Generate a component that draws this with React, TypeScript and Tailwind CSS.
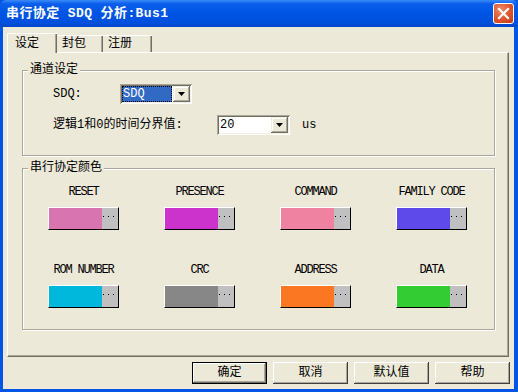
const colorItems = [
  { name: 'RESET', color: 'bg-[#d874b0]' },
  { name: 'PRESENCE', color: 'bg-[#cc33cc]' },
  { name: 'COMMAND', color: 'bg-[#ef82a0]' },
  { name: 'FAMILY CODE', color: 'bg-[#5e4aeb]' },
  { name: 'ROM NUMBER', color: 'bg-[#00b7dc]' },
  { name: 'CRC', color: 'bg-[#878787]' },
  { name: 'ADDRESS', color: 'bg-[#fc7722]' },
  { name: 'DATA', color: 'bg-[#33cc33]' },
]

const Arrow = () => (
  <svg width="7" height="4" viewBox="0 0 7 4">
    <path d="M0 0h7L3.5 4z" fill="#000" />
  </svg>
)

const Combo = ({ value, width, selected }: { value: string; width: string; selected?: boolean }) => (
  <div className={`${width} h-[20px] flex p-[2px] bg-white shadow-[inset_1px_1px_0_#aca899,inset_-1px_-1px_0_#fff,inset_2px_2px_0_#716f64,inset_-2px_-2px_0_#f1efe2]`}>
    <div className="flex-1 flex items-center pr-[1px]">
      {selected ? (
        <span className="w-full h-full flex items-center pl-[1px] bg-[#316ac5] text-white outline-1 outline-dotted outline-black -outline-offset-1">{value}</span>
      ) : (
        <span className="pl-[1px]">{value}</span>
      )}
    </div>
    <div className="w-[17px] flex items-center justify-center bg-[#ece9d8] shadow-[inset_-1px_-1px_0_#716f64,inset_1px_1px_0_#f1efe2,inset_-2px_-2px_0_#aca899,inset_2px_2px_0_#fff]">
      <Arrow />
    </div>
  </div>
)

const Group = ({ title, className, children }: { title: string; className: string; children: React.ReactNode }) => (
  <div className={`relative border border-[#aca899] shadow-[inset_1px_1px_0_#fff,1px_1px_0_#fff] ${className}`}>
    <span className="absolute -top-[8px] left-[5px] px-[2px] bg-[#ece9d8] leading-[14px]">{title}</span>
    {children}
  </div>
)

const Swatch = ({ color }: { color: string }) => (
  <div className="flex w-[71px] h-[23px] border border-t-white border-l-white border-r-black border-b-black">
    <div className={`w-[53px] h-full ${color}`} />
    <div className="flex-1 flex items-start gap-[4px] pl-[1px] pt-[8px] bg-[#c0c0c0]">
      <span className="w-px h-px bg-black" />
      <span className="w-px h-px bg-black" />
      <span className="w-px h-px bg-black" />
    </div>
  </div>
)

const Button = ({ label, primary }: { label: string; primary?: boolean }) => (
  <button className={`w-[75px] h-[22px] flex items-center justify-center bg-[#ece9d8] ${primary ? 'border border-black shadow-[inset_-1px_-1px_0_#716f64,inset_1px_1px_0_#fff,inset_-2px_-2px_0_#aca899]' : 'shadow-[inset_-1px_-1px_0_#404040,inset_1px_1px_0_#fff,inset_-2px_-2px_0_#aca899]'}`}>
    {label}
  </button>
)

export default function App() {
  return (
    <div className="w-[518px] h-[392px] flex flex-col bg-[#0055e5] text-[12px] text-black font-['Liberation_Mono','Noto_Sans_CJK_SC',monospace]">
      <div className="h-[27px] flex items-center justify-between pl-[6px] pr-[4px] rounded-t-[6px] bg-[linear-gradient(to_bottom,#3a8cf8_0%,#0a5eeb_14%,#0054e3_50%,#0050dd_85%,#0046c8_100%)]">
        <span className="text-white font-bold text-[13px] tracking-[0.4px]">串行协定 SDQ 分析:Bus1</span>
        <div className="w-[21px] h-[21px] rounded-[3px] border border-white flex items-center justify-center bg-[radial-gradient(circle_at_35%_30%,#ec8a6a_0%,#e0532c_55%,#c13a17_100%)]">
          <svg width="13" height="13" viewBox="0 0 13 13">
            <path d="M2 2l9 9M11 2l-9 9" stroke="#fff" strokeWidth="2.2" strokeLinecap="square" />
          </svg>
        </div>
      </div>

      <div className="flex-1 ml-[3px] mr-[4px] mb-[3px] bg-[#ece9d8] flex flex-col pt-[6px] pl-[4px] pr-[4px]">
        <div className="flex items-end h-[19px]">
          <div className="relative z-10 w-[50px] h-[20px] -mb-px flex items-center pl-[7px] bg-[#ece9d8] border-t border-l border-white shadow-[inset_-1px_0_0_#716f64,inset_-2px_0_0_#aca899]">设定</div>
          <div className="w-[46px] h-[17px] flex items-center pl-[5px] border-t border-white shadow-[inset_-1px_0_0_#716f64,inset_-2px_0_0_#aca899]">封包</div>
          <div className="w-[49px] h-[17px] flex items-center pl-[5px] border-t border-white shadow-[inset_-1px_0_0_#716f64,inset_-2px_0_0_#aca899]">注册</div>
        </div>

        <div className="h-[305px] mr-[1px] flex flex-col border-t border-l border-white border-r border-b border-r-[#716f64] border-b-[#716f64] shadow-[inset_-1px_-1px_0_#aca899]">
          <Group title="通道设定" className="mt-[17px] ml-[14px] w-[473px] h-[86px] pt-[13px] pl-[30px]">
            <div className="flex items-center h-[20px]">
              <span className="w-[67px]">SDQ:</span>
              <Combo value="SDQ" width="w-[72px]" selected />
            </div>
            <div className="flex items-center h-[20px] mt-[11px]">
              <span className="w-[164px]">逻辑1和0的时间分界值:</span>
              <Combo value="20" width="w-[73px]" />
              <span className="ml-[12px]">us</span>
            </div>
          </Group>

          <Group title="串行协定颜色" className="mt-[12px] ml-[14px] w-[473px] h-[162px] pt-[16px] pl-[25px]">
            <div className="grid grid-cols-[repeat(4,71px)] gap-x-[45px]">
              {colorItems.map((item, i) => (
                <div key={item.name} className={`flex flex-col items-center ${i >= 4 ? 'mt-[33px]' : ''}`}>
                  <span className="h-[14px] leading-[14px] mb-[8px] whitespace-nowrap text-[12px] tracking-[-1.2px] font-['Liberation_Mono',monospace]">{item.name}</span>
                  <Swatch color={item.color} />
                </div>
              ))}
            </div>
          </Group>
        </div>

        <div className="flex justify-end gap-[6px] mt-[5px]">
          <Button label="确定" primary />
          <Button label="取消" />
          <Button label="默认值" />
          <Button label="帮助" />
        </div>
      </div>
    </div>
  )
}
